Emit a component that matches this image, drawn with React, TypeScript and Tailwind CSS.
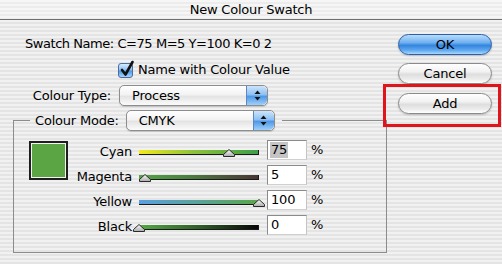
import React from "react";

type SliderRow = {
    label: string;
    value: number;
    track: string;
    selected?: boolean;
};

const rows: SliderRow[] = [
    { label: "Cyan", value: 75, track: "bg-[linear-gradient(90deg,#f4ea1c,#8fc23a_45%,#3f9d47)]", selected: true },
    { label: "Magenta", value: 5, track: "bg-[linear-gradient(90deg,#52a648,#4b7a3f_45%,#4a3433)]" },
    { label: "Yellow", value: 100, track: "bg-[linear-gradient(90deg,#5a9fe2,#5aa3a0_45%,#58a748)]" },
    { label: "Black", value: 0, track: "bg-[linear-gradient(90deg,#56a947,#2f5f28_50%,#080808)]" },
];

const stripes = "bg-[repeating-linear-gradient(180deg,#f1f1f1_0px,#f1f1f1_2px,#e4e4e4_2px,#e4e4e4_4px)]";

function PopupArrows() {
    return (
        <div className="flex h-full w-[21px] items-center justify-center rounded-r-[5px] border-l border-[#5c87c4] bg-[linear-gradient(180deg,#cde4fb_0%,#8ec0f3_45%,#4f98e6_55%,#9fd0fb_100%)]">
            <svg width="7" height="11" viewBox="0 0 7 11">
                <path d="M3.5 0.5 L6.5 4 H0.5 Z" fill="#111" />
                <path d="M3.5 10.5 L6.5 7 H0.5 Z" fill="#111" />
            </svg>
        </div>
    );
}

function Popup({ value, width }: { value: string; width: string }) {
    return (
        <div
            className={`${width} flex h-[21px] items-stretch overflow-hidden rounded-[5px] border border-[#8d8d8d] bg-[linear-gradient(180deg,#ffffff_0%,#f3f3f3_45%,#e4e4e4_55%,#fbfbfb_100%)] shadow-[0_1px_1px_rgba(0,0,0,0.15)]`}
        >
            <span className="flex-1 pl-[12px] leading-[19px]">{value}</span>
            <PopupArrows />
        </div>
    );
}

function AquaButton({ label, primary }: { label: string; primary?: boolean }) {
    return (
        <div
            className={`flex h-[21px] w-[94px] items-center justify-center rounded-full border leading-none shadow-[0_1px_2px_rgba(0,0,0,0.2)] ${primary
                ? "border-[#2d5fa6] bg-[linear-gradient(180deg,#b9dcfb_0%,#6fb0ef_40%,#3485de_55%,#5ea8f0_80%,#a9d8fd_100%)]"
                : "border-[#8a8a8a] bg-[linear-gradient(180deg,#ffffff_0%,#f2f2f2_40%,#dedede_55%,#ececec_80%,#ffffff_100%)]"
                }`}
        >
            {label}
        </div>
    );
}

function Thumb() {
    return (
        <svg width="12" height="8" viewBox="0 0 12 8">
            <defs>
                <linearGradient id="thumb" x1="0" y1="0" x2="0" y2="1">
                    <stop offset="0" stopColor="#ffffff" />
                    <stop offset="1" stopColor="#a9a9a9" />
                </linearGradient>
            </defs>
            <path d="M6 0.5 L11.5 5.5 V7.5 H0.5 V5.5 Z" fill="url(#thumb)" stroke="#2b2b2b" strokeWidth="1" />
        </svg>
    );
}

export default function App() {
    return (
        <div className={`relative h-[264px] w-[502px] overflow-hidden text-[13px] tracking-[-0.2px] text-black font-['DejaVu_Sans','Liberation_Sans',sans-serif] ${stripes}`}>
            <div className="flex h-[20px] items-center justify-center border-b border-[#707070] bg-[repeating-linear-gradient(180deg,#f6f6f6_0px,#f6f6f6_2px,#ececec_2px,#ececec_4px)] leading-none">
                New Colour Swatch
            </div>

            <div className="flex">
                <div className="w-[380px]">
                    <div className="pl-[25px] pt-[16px] leading-[16px] tracking-[-0.45px]">Swatch Name: C=75 M=5 Y=100 K=0 2</div>

                    <div className="mt-[10px] flex h-[16px] items-center gap-[5px] pl-[118px]">
                        <div className="relative h-[15px] w-[15px] rounded-[3px] border border-[#4a6f9e] bg-[linear-gradient(180deg,#d7ebfd_0%,#8cc0f2_45%,#4f97e3_55%,#a6d4fb_100%)]">
                            <svg className="absolute -top-[3px] left-[1px] overflow-visible" width="14" height="16" viewBox="0 0 14 16">
                                <path d="M2 9 L5.5 13.5 L12.5 1" fill="none" stroke="#111" strokeWidth="2.6" strokeLinejoin="round" strokeLinecap="round" />
                            </svg>
                        </div>
                        <span className="leading-[16px]">Name with Colour Value</span>
                    </div>

                    <div className="mt-[7px] flex h-[21px] items-center">
                        <span className="w-[112px] pr-[1px] text-right">Colour Type:</span>
                        <div className="ml-[7px]">
                            <Popup value="Process" width="w-[149px]" />
                        </div>
                    </div>

                    <fieldset className="ml-[13px] mt-[4px] w-[374px] border border-[#8c8c8c] pb-[17px]">
                        <legend className="ml-[16px] flex items-center pl-[5px] pr-[7px]">
                            <span>Colour Mode:</span>
                            <div className="ml-[7px]">
                                <Popup value="CMYK" width="w-[149px]" />
                            </div>
                        </legend>

                        <div className="mt-[9px] flex">
                            <div className="ml-[15px] mt-[1px] h-[39px] w-[39px] border-2 border-[#1e1e1e] bg-[#5ba545] shadow-[inset_0_0_0_1px_#f4f4f4]" />
                            <div className="flex flex-col gap-[5px]">
                                {rows.map((row) => (
                                    <div key={row.label} className="flex h-[20px] items-center">
                                        <span className="w-[64px] pt-[3px] text-right">{row.label}</span>
                                        <div className="relative ml-[7px] h-[20px] w-[120px]">
                                            <div className={`mt-[10px] h-[5px] w-full border-b border-r border-[#1a1a1a] ${row.track}`} />
                                            <div
                                                className="absolute top-[9px] -translate-x-1/2"
                                                style={{ left: `${row.value}%` }}
                                            >
                                                <Thumb />
                                            </div>
                                        </div>
                                        <div className="ml-[8px] flex h-[20px] w-[40px] items-center border border-[#8a8a8a] border-b-[#d0d0d0] border-r-[#c4c4c4] bg-white pl-[2px]">
                                            <span className={`px-[1px] leading-[16px] ${row.selected ? "bg-[#c4c4c4]" : ""}`}>{row.value}</span>
                                        </div>
                                        <span className="ml-[4px]">%</span>
                                    </div>
                                ))}
                            </div>
                        </div>
                    </fieldset>
                </div>

                <div className="pt-[14px]">
                    <div className="ml-[18px]">
                        <AquaButton label="OK" primary />
                    </div>
                    <div className="ml-[18px] mt-[8px]">
                        <AquaButton label="Cancel" />
                    </div>
                    <div className="ml-[3px] w-[118px] border-[3px] border-[#e0141b] pb-[10px] pl-[12px] pt-[6px]">
                        <AquaButton label="Add" />
                    </div>
                </div>
            </div>
        </div>
    );
}
